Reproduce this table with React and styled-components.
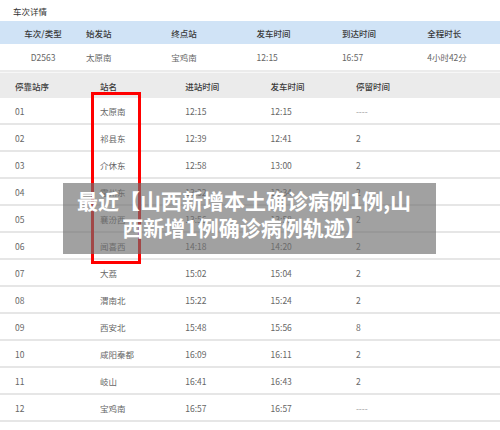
import React from "react";
import styled, { createGlobalStyle } from "styled-components";

const GlobalStyle = createGlobalStyle`
  body {
    margin: 0;
    background: #fff;
    font-family: "Noto Sans CJK SC", "Noto Sans", sans-serif;
  }
`;

const summaryHead = ["车次/类型", "始发站", "终点站", "发车时间", "到达时间", "全程时长"];
const summaryData = ["D2563", "太原南", "宝鸡南", "12:15", "16:57", "4小时42分"];

const stopHead = ["停靠站序", "站名", "进站时间", "发车时间", "停留时间"];
const stops = [
  ["01", "太原南", "12:15", "12:15", "----"],
  ["02", "祁县东", "12:39", "12:41", "2"],
  ["03", "介休东", "12:58", "13:00", "2"],
  ["04", "霍州东", "13:32", "13:34", "2"],
  ["05", "襄汾西", "13:56", "13:58", "2"],
  ["06", "闻喜西", "14:18", "14:20", "2"],
  ["07", "大荔", "15:02", "15:04", "2"],
  ["08", "渭南北", "15:22", "15:24", "2"],
  ["09", "西安北", "15:48", "15:56", "8"],
  ["10", "咸阳秦都", "16:09", "16:11", "2"],
  ["11", "岐山", "16:41", "16:43", "2"],
  ["12", "宝鸡南", "16:57", "16:57", "----"],
];

export default function App() {
  return (
    <Page>
      <GlobalStyle />
      <Title>车次详情</Title>
      <SummaryGrid $head>
        {summaryHead.map((t, i) => (
          <Cell key={t} $center={i === 0} $head>
            {t}
          </Cell>
        ))}
      </SummaryGrid>
      <SummaryGrid>
        {summaryData.map((t, i) => (
          <Cell key={t} $center={i === 0}>
            {t}
          </Cell>
        ))}
      </SummaryGrid>
      <Divider />
      <StopGrid $head>
        {stopHead.map((t) => (
          <Cell key={t} $head>
            {t}
          </Cell>
        ))}
      </StopGrid>
      {stops.map((row) => (
        <StopGrid key={row[0]}>
          {row.map((t, i) => (
            <Cell key={i} $muted={t === "----"}>
              {t}
            </Cell>
          ))}
        </StopGrid>
      ))}
      <Highlight />
      <Banner>
        最近【山西新增本土确诊病例1例,山
        <br />
        西新增1例确诊病例轨迹】
      </Banner>
    </Page>
  );
}

const Page = styled.div`
  position: relative;
  width: 500px;
  height: 430px;
  overflow: hidden;
  background: #fff;
  font-size: 8.5px;
  color: #666;
`;

const Title = styled.div`
  height: 21px;
  padding-left: 13px;
  display: flex;
  align-items: center;
  padding-top: 1px;
  box-sizing: border-box;
  color: #333;
`;

const SummaryGrid = styled.div`
  display: grid;
  grid-template-columns: 86px repeat(5, 85.3px);
  align-items: center;
  height: ${(p) => (p.$head ? "23px" : "26px")};
  background: ${(p) => (p.$head ? "#d0e3f6" : "#fff")};
`;

const Divider = styled.div`
  height: 2px;
  background: #ebebeb;
  border-bottom: 1px solid #f7f7f7;
`;

const StopGrid = styled.div`
  display: grid;
  grid-template-columns: 100px 85.3px 85.3px 85.3px 1fr;
  align-items: center;
  box-sizing: border-box;
  height: ${(p) => (p.$head ? "25px" : "27px")};
  background: ${(p) => (p.$head ? "#ebebeb" : "#fff")};
  border-bottom: ${(p) => (p.$head ? "none" : "2px solid #e6e6e6")};

  & > div:first-child {
    padding-left: 15px;
  }
`;

const Cell = styled.div`
  white-space: nowrap;
  text-align: ${(p) => (p.$center ? "center" : "left")};
  color: ${(p) => (p.$head ? "#3a3a3a" : p.$muted ? "#999" : "#666")};
  font-weight: ${(p) => (p.$head ? 500 : 400)};
`;

const Highlight = styled.div`
  position: absolute;
  left: 91px;
  top: 92px;
  width: 50px;
  height: 172px;
  box-sizing: border-box;
  border: 3px solid #f00;
`;

const Banner = styled.div`
  position: absolute;
  left: 63px;
  top: 183px;
  width: 373px;
  height: 71px;
  box-sizing: border-box;
  padding: 4px 11px 0 0;
  background: rgba(110, 110, 110, 0.65);
  color: #fff;
  font-size: 21px;
  font-weight: 700;
  line-height: 27px;
  text-align: center;
  white-space: nowrap;
`;
